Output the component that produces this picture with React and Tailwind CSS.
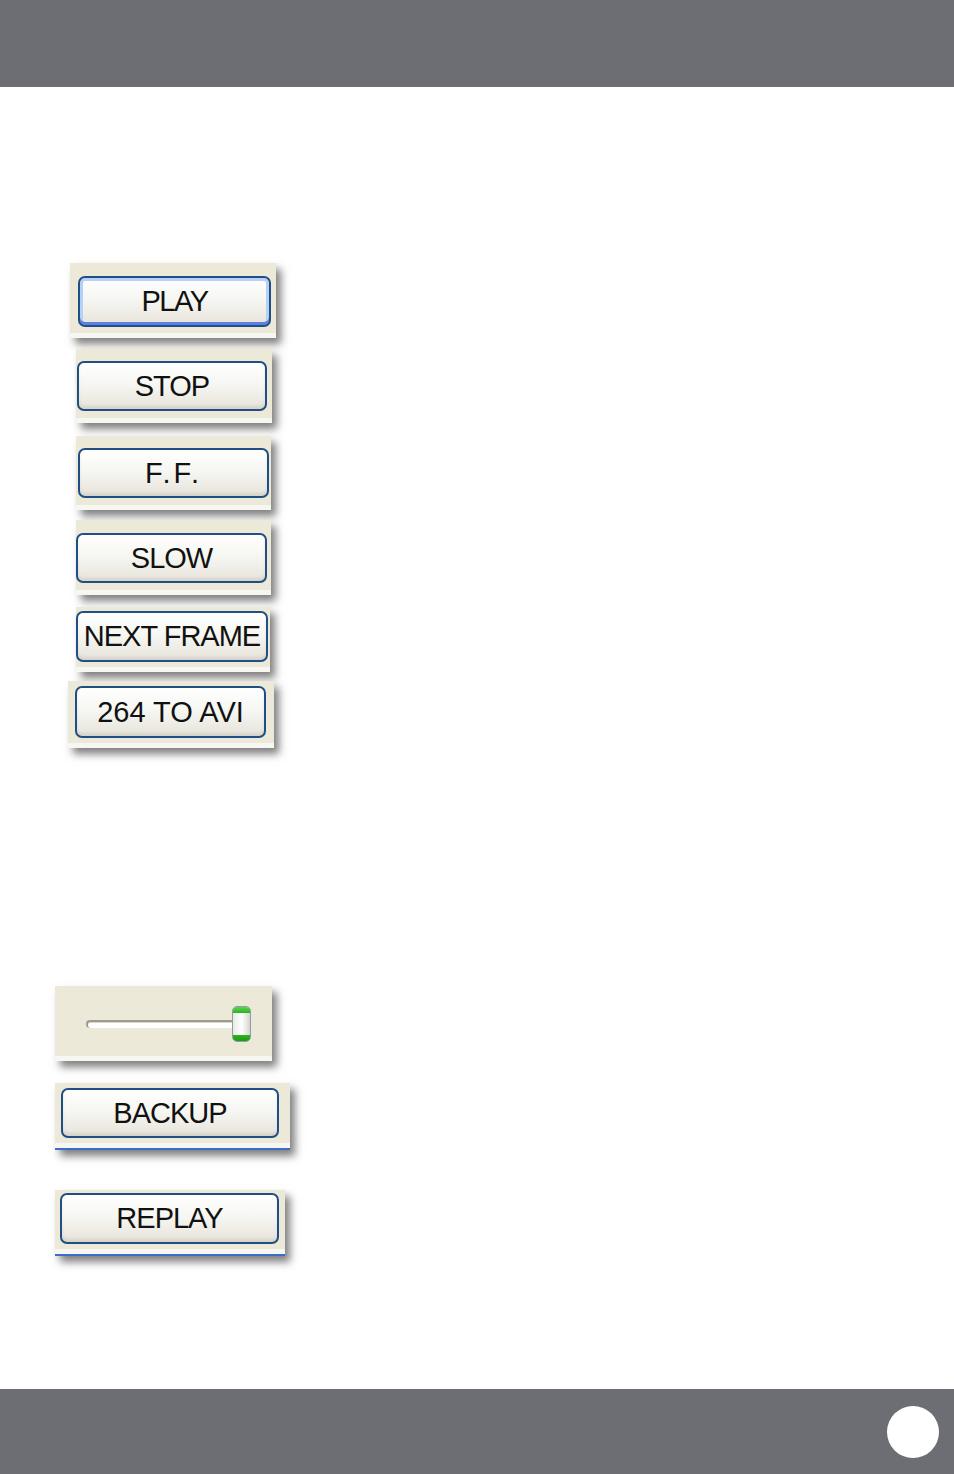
import React from "react";

function XpButton({ label, className, focused, textClass }) {
  return (
    <div
      className={
        "flex items-center justify-center rounded-[7px] border-2 border-[#1f4f85] bg-gradient-to-b from-[#ffffff] via-[#f5f5f1] to-[#e6e3d9] text-black " +
        (focused
          ? "shadow-[inset_0_-3px_0_#5d7fe2,inset_0_0_0_3px_#b6d0f7] "
          : "shadow-[inset_0_-3px_3px_rgba(0,0,0,0.07)] ") +
        className
      }
    >
      <span
        className={
          "font-['Liberation_Sans',Arial,sans-serif] text-[29px] leading-none text-[#111] " +
          (textClass || "tracking-[-0.5px]")
        }
      >
        {label}
      </span>
    </div>
  );
}

function Card({ className, children, blueLine }) {
  return (
    <div
      className={
        "flex flex-col self-start shadow-[5px_6px_8px_rgba(0,0,0,0.5)] " +
        className
      }
    >
      <div className="flex flex-1 flex-col bg-[#ece9d8]">{children}</div>
      <div className="h-[5px] bg-[#f6f6f2]" />
      {blueLine && <div className="h-[2px] bg-[#3b6cc7]" />}
    </div>
  );
}

export default function App() {
  return (
    <div className="flex min-h-[1474px] w-[954px] flex-col bg-white">
      <header className="h-[87px] bg-[#6d6e73]" />

      <main className="flex flex-1 flex-col">
        {/* PLAY */}
        <Card className="ml-[70px] mt-[176px] h-[75px] w-[206px]">
          <div className="pl-[8px] pt-[13px]">
            <XpButton focused label="PLAY" className="h-[51px] w-[193px]" textClass="tracking-[-1.5px]" />
          </div>
        </Card>

        {/* STOP */}
        <Card className="ml-[76px] mt-[11px] h-[74px] w-[196px]">
          <div className="pl-[1px] pt-[12px]">
            <XpButton label="STOP" className="h-[50px] w-[190px]" textClass="tracking-[-1px]" />
          </div>
        </Card>

        {/* F.F. */}
        <Card className="ml-[76px] mt-[13px] h-[74px] w-[195px]">
          <div className="pl-[2px] pt-[12px]">
            <XpButton label="F.F." className="h-[50px] w-[191px]" textClass="tracking-[3px]" />
          </div>
        </Card>

        {/* SLOW */}
        <Card className="ml-[76px] mt-[10px] h-[75px] w-[195px]">
          <div className="pl-[0px] pt-[13px]">
            <XpButton label="SLOW" className="h-[50px] w-[191px]" textClass="tracking-[-1px]" />
          </div>
        </Card>

        {/* NEXT FRAME */}
        <Card className="ml-[76px] mt-[12px] h-[65px] w-[194px]">
          <div className="pl-[0px] pt-[4px]">
            <XpButton label="NEXT FRAME" className="h-[51px] w-[192px]" textClass="tracking-[-1px]" />
          </div>
        </Card>

        {/* 264 TO AVI */}
        <Card className="ml-[68px] mt-[9px] h-[67px] w-[206px]">
          <div className="pl-[7px] pt-[5px]">
            <XpButton label="264 TO AVI" className="h-[52px] w-[191px]" textClass="tracking-[0px]" />
          </div>
        </Card>

        {/* Slider */}
        <Card className="ml-[55px] mt-[238px] h-[75px] w-[217px]">
          <div className="flex items-center pl-[31px] pt-[20px]">
            <div className="relative flex h-[36px] w-[166px] items-center">
              <div className="h-[8px] w-[152px] rounded-l-full border-t-2 border-l-2 border-[#9d9a8f] bg-white shadow-[inset_0_1px_0_#d8d5c9]" />
              <div className="absolute left-[146px] top-0 flex h-[36px] w-[19px] flex-col overflow-hidden rounded-[5px] border border-[#8f9ba5] bg-gradient-to-r from-[#e9e9e4] via-[#ffffff] to-[#d5d5cf]">
                <div className="h-[6px] bg-gradient-to-b from-[#5ad44c] to-[#27b31a]" />
                <div className="flex-1" />
                <div className="h-[6px] bg-gradient-to-b from-[#2bb51d] to-[#1f9a14]" />
              </div>
            </div>
          </div>
        </Card>

        {/* BACKUP */}
        <Card blueLine className="ml-[55px] mt-[22px] h-[67px] w-[235px]">
          <div className="pl-[6px] pt-[5px]">
            <XpButton label="BACKUP" className="h-[50px] w-[218px]" textClass="tracking-[-1px]" />
          </div>
        </Card>

        {/* REPLAY */}
        <Card blueLine className="ml-[55px] mt-[40px] h-[66px] w-[230px]">
          <div className="pl-[5px] pt-[3px]">
            <XpButton label="REPLAY" className="h-[51px] w-[219px]" textClass="tracking-[-1px]" />
          </div>
        </Card>

        <div className="flex-1" />
      </main>

      <footer className="flex h-[85px] items-center justify-end bg-[#6d6e73] pr-[15px]">
        <div className="h-[52px] w-[52px] rounded-full bg-white" />
      </footer>
    </div>
  );
}
